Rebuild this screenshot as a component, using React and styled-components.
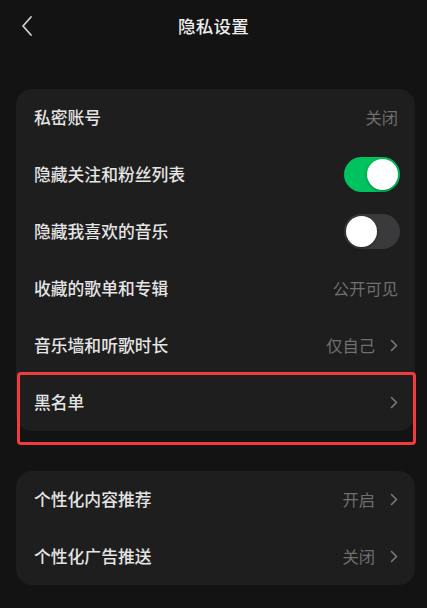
import React from 'react';
import styled, { createGlobalStyle } from 'styled-components';

const Global = createGlobalStyle`
  html, body {
    margin: 0;
    padding: 0;
    background: #131313;
  }
  body {
    font-family: "Noto Sans CJK SC", "Noto Sans", sans-serif;
  }
`;

const Page = styled.div`
  width: 427px;
  min-height: 608px;
  background: #131313;
  display: flex;
  flex-direction: column;
`;

const Header = styled.div`
  height: 51px;
  display: flex;
  align-items: center;
  justify-content: center;
  position: relative;
`;

const Back = styled.div`
  position: absolute;
  left: 20px;
  top: 15px;
  width: 14px;
  height: 22px;
  display: flex;
`;

const Title = styled.div`
  font-size: 17.5px;
  font-weight: 500;
  color: #ededed;
  letter-spacing: 0.2px;
`;

const Content = styled.div`
  padding: 38px 12px 0 16px;
  display: flex;
  flex-direction: column;
  gap: 40px;
`;

const Card = styled.div`
  background: #1e1e1e;
  border-radius: 16px;
  display: flex;
  flex-direction: column;
`;

const Row = styled.div`
  height: 57px;
  padding: 0 17px 0 18px;
  display: flex;
  align-items: center;
  justify-content: space-between;
  position: relative;

  ${(p) =>
    p.highlight &&
    `
    &::after {
      content: '';
      position: absolute;
      left: 1px;
      right: -1px;
      top: -2px;
      bottom: -14px;
      border: 3px solid #f23b3f;
      border-radius: 4px;
      pointer-events: none;
    }
  `}
`;

const Label = styled.span`
  font-size: 16.8px;
  font-weight: 500;
  color: #e4e4e4;
  margin-top: -2px;
`;

const Right = styled.div`
  display: flex;
  align-items: center;
  gap: 15px;
`;

const Value = styled.span`
  font-size: 16.3px;
  color: #6f6f6f;
  margin-top: -2px;
`;

const Toggle = styled.div`
  width: 56px;
  height: 35px;
  border-radius: 18px;
  background: ${(p) => (p.on ? '#00c25e' : '#3a3a3c')};
  display: flex;
  align-items: center;
  justify-content: ${(p) => (p.on ? 'flex-end' : 'flex-start')};
  padding: 0 2px;
  box-sizing: border-box;
  margin-right: -2px;
`;

const Knob = styled.div`
  width: 31px;
  height: 31px;
  border-radius: 50%;
  background: #ffffff;
  box-shadow: 0 1px 3px rgba(0, 0, 0, 0.35);
`;

const Chevron = () => (
  <svg width="8" height="13" viewBox="0 0 8 13" fill="none">
    <path d="M1.5 1.5L6.5 6.5L1.5 11.5" stroke="#7a7a7a" strokeWidth="1.6" strokeLinecap="round" strokeLinejoin="round" />
  </svg>
);

const rows1 = [
  { label: '私密账号', value: '关闭' },
  { label: '隐藏关注和粉丝列表', toggle: true, on: true },
  { label: '隐藏我喜欢的音乐', toggle: true, on: false },
  { label: '收藏的歌单和专辑', value: '公开可见' },
  { label: '音乐墙和听歌时长', value: '仅自己', arrow: true },
  { label: '黑名单', arrow: true, highlight: true },
];

const rows2 = [
  { label: '个性化内容推荐', value: '开启', arrow: true },
  { label: '个性化广告推送', value: '关闭', arrow: true },
];

const SettingRow = ({ item }) => (
  <Row highlight={item.highlight}>
    <Label>{item.label}</Label>
    {item.toggle ? (
      <Toggle on={item.on}>
        <Knob />
      </Toggle>
    ) : (
      <Right>
        {item.value && <Value>{item.value}</Value>}
        {item.arrow && <Chevron />}
      </Right>
    )}
  </Row>
);

export default function App() {
  return (
    <Page>
      <Global />
      <Header>
        <Back>
          <svg width="14" height="22" viewBox="0 0 14 22" fill="none">
            <path d="M11 2L3 11L11 20" stroke="#d0d0d0" strokeWidth="1.8" strokeLinecap="round" strokeLinejoin="round" />
          </svg>
        </Back>
        <Title>隐私设置</Title>
      </Header>
      <Content>
        <Card>
          {rows1.map((r) => (
            <SettingRow key={r.label} item={r} />
          ))}
        </Card>
        <Card>
          {rows2.map((r) => (
            <SettingRow key={r.label} item={r} />
          ))}
        </Card>
      </Content>
    </Page>
  );
}
